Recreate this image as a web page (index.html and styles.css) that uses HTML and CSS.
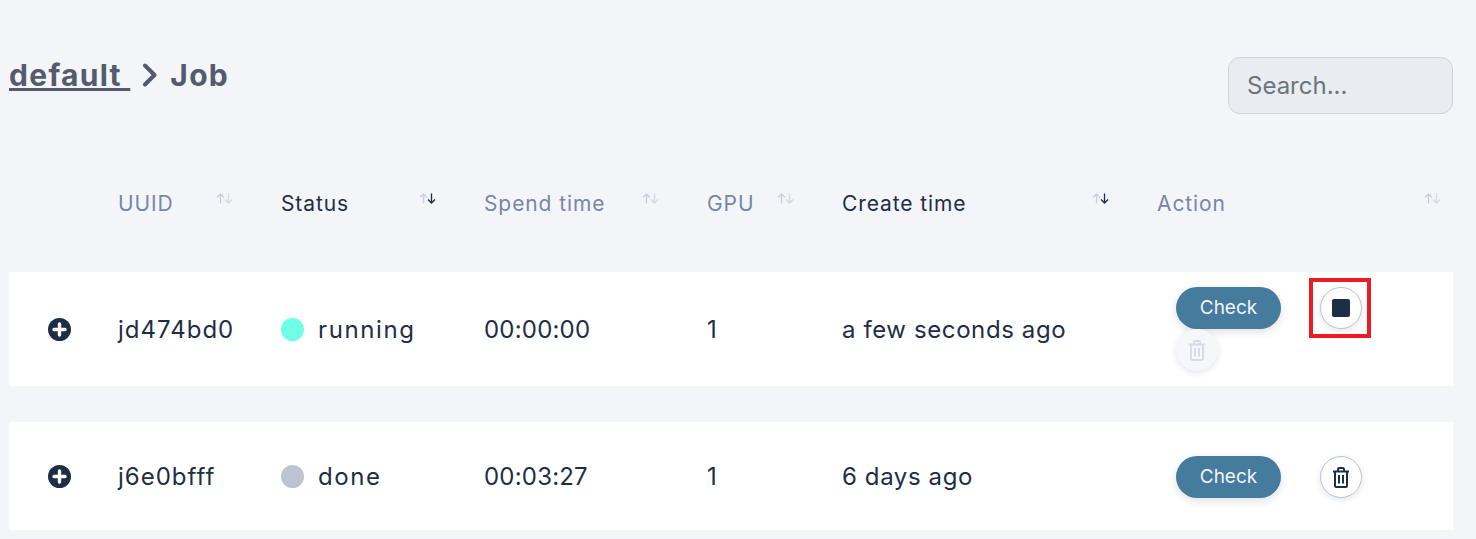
FILE: index.html
```html
<!DOCTYPE html>
<html lang="en">
<head>
    <meta charset="UTF-8">
    <meta name="viewport" content="width=device-width, initial-scale=1.0">
    <title>Job</title>
    <link rel="stylesheet" href="styles.css">
</head>
<body>

<svg class="icon-defs" width="0" height="0">
    <defs>
        <symbol id="sort-icon" viewBox="0 0 17 11">
            <path stroke="#c9cede" d="M4.500 10.500V1M1 4.500L4.500 1 8 4.500"/>
            <path stroke="currentColor" d="M12.500.5V10M9 6.500l3.500 3.500L16 6.500"/>
        </symbol>
        <symbol id="trash-icon" viewBox="0 0 18 21">
            <path d="M1 4.500h16M6 4.500V2.300c0-.7.500-1.300 1.200-1.300h3.600c.7 0 1.200.6 1.200 1.300v2.200M3 4.500v14c0 1 .7 1.500 1.500 1.500h9c.8 0 1.500-.5 1.500-1.500v-14M7 8v8.500M11 8v8.500"/>
        </symbol>
        <symbol id="plus-icon" viewBox="0 0 23 23">
            <circle cx="11.500" cy="11.500" r="11.500" fill="#1f2d45"/>
            <path d="M11.500 6v11M6 11.500h11" stroke="#fff" stroke-width="3.400" stroke-linecap="round"/>
        </symbol>
    </defs>
</svg>

<div class="page">
    <div class="top-bar">
        <h1 class="crumbs">
            <a class="crumb-link" href="#">default&nbsp;</a>
            <svg class="crumb-sep" viewBox="0 0 16 24" width="16" height="24"><path d="M3 2.500l9.500 9.500L3 21.500"/></svg>
            <span>Job</span>
        </h1>
        <input class="search" type="text" placeholder="Search...">
    </div>

    <div class="job-table">
        <div class="cols head">
            <div class="th"><span></span></div>
            <div class="th"><span>UUID</span><svg class="sort"><use href="#sort-icon"/></svg></div>
            <div class="th active"><span>Status</span><svg class="sort"><use href="#sort-icon"/></svg></div>
            <div class="th"><span>Spend time</span><svg class="sort"><use href="#sort-icon"/></svg></div>
            <div class="th"><span>GPU</span><svg class="sort"><use href="#sort-icon"/></svg></div>
            <div class="th active"><span>Create time</span><svg class="sort"><use href="#sort-icon"/></svg></div>
            <div class="th last"><span>Action</span><svg class="sort"><use href="#sort-icon"/></svg></div>
        </div>

        <div class="cols job tall">
            <div class="cell expand"><svg class="plus"><use href="#plus-icon"/></svg></div>
            <div class="cell uuid">jd474bd0</div>
            <div class="cell status"><span class="dot running"></span>running</div>
            <div class="cell spend">00:00:00</div>
            <div class="cell">1</div>
            <div class="cell">a few seconds ago</div>
            <div class="cell actions">
                <button class="check-btn">Check</button>
                <button class="round-btn marked"><span class="stop"></span></button>
                <button class="round-btn disabled"><svg class="trash"><use href="#trash-icon"/></svg></button>
            </div>
        </div>

        <div class="cols job">
            <div class="cell expand"><svg class="plus"><use href="#plus-icon"/></svg></div>
            <div class="cell uuid">j6e0bfff</div>
            <div class="cell status"><span class="dot done"></span>done</div>
            <div class="cell spend">00:03:27</div>
            <div class="cell">1</div>
            <div class="cell">6 days ago</div>
            <div class="cell actions">
                <button class="check-btn">Check</button>
                <button class="round-btn"><svg class="trash"><use href="#trash-icon"/></svg></button>
            </div>
        </div>
    </div>
</div>

</body>
</html>
```

FILE: styles.css
```css
/* General Styles */
body {
    font-family: Inter, 'Noto Sans', sans-serif;
    margin: 0;
    background-color: #f3f5f9;
    color: #1f2d45;
    overflow: hidden;
}

.page {
    padding: 57px 23px 0 9px;
}

.icon-defs {
    position: absolute;
}

/* Top bar */
.top-bar {
    display: flex;
    justify-content: space-between;
    align-items: flex-start;
    height: 57px;
}

.crumbs {
    display: flex;
    align-items: center;
    margin: 0;
    height: 36px;
    font-size: 30px;
    font-weight: 700;
    letter-spacing: 1.300px;
    color: #555a6e;
}

.crumb-link {
    color: #555a6e;
}

.crumb-sep {
    margin: 0 12px;
}

.crumb-sep path {
    fill: none;
    stroke: #555a6e;
    stroke-width: 4;
    stroke-linecap: round;
    stroke-linejoin: round;
}

.search {
    box-sizing: border-box;
    width: 225px;
    height: 57px;
    padding: 0 18px;
    font-family: inherit;
    font-size: 24px;
    background-color: #e9ecf1;
    border: 1px solid #ced4da;
    border-radius: 12px;
}

.search::placeholder {
    color: #6c757d;
    opacity: 1;
}

/* Table */
.cols {
    display: grid;
    grid-template-columns: 109px 163px 203px 223px 135px 315px 296px;
}

.head {
    height: 158px;
    align-items: start;
}

.th {
    display: flex;
    justify-content: space-between;
    align-items: flex-start;
    padding: 76px 48px 0 0;
    font-size: 21px;
    line-height: 28px;
    letter-spacing: 0.900px;
    color: #7a86a5;
}

.th.active {
    color: #1f2d45;
}

.th.last {
    padding-right: 12px;
}

.sort {
    width: 17px;
    height: 11px;
    margin-top: 3px;
    fill: none;
    stroke-width: 1.300;
    color: #d3d7e2;
}

.active .sort {
    color: #1f2d45;
}

.job {
    height: 108px;
    background-color: #fff;
    align-items: center;
}

.job + .job {
    margin-top: 36px;
}

.job.tall {
    height: 114px;
}

.cell {
    display: flex;
    align-items: center;
    font-size: 24px;
    letter-spacing: 0.600px;
}

.cell.uuid {
    letter-spacing: 1px;
}

.cell.status {
    letter-spacing: 1.600px;
}

.cell.spend {
    letter-spacing: 0.200px;
}

.expand {
    padding-left: 39px;
}

.plus {
    width: 23px;
    height: 23px;
}

.dot {
    width: 23px;
    height: 23px;
    margin-right: 14px;
    border-radius: 50%;
}

.dot.running {
    background-color: #6fffe9;
}

.dot.done {
    background-color: #bcc3d3;
}

/* Actions */
.actions {
    flex-wrap: wrap;
    width: 200px;
    margin: 1px 0 0 19px;
    column-gap: 39px;
}

.tall .actions {
    margin-top: -1px;
}

.check-btn {
    width: 105px;
    height: 42px;
    padding: 0;
    border: none;
    border-radius: 21px;
    background-color: #457b9d;
    color: #f1f5f8;
    font-family: inherit;
    font-size: 19px;
    box-shadow: 0 3px 8px rgba(31, 45, 69, 0.15);
}

.round-btn {
    position: relative;
    display: flex;
    justify-content: center;
    align-items: center;
    box-sizing: border-box;
    width: 42px;
    height: 42px;
    margin-top: 1px;
    padding: 0;
    background-color: #fff;
    border: 1px solid #bcc3d3;
    border-radius: 50%;
    box-shadow: 0 2px 6px rgba(31, 45, 69, 0.12);
}

.round-btn.disabled {
    margin-top: 0;
    background-color: #f6f7fa;
    border-color: #f6f7fa;
}

.round-btn.marked::after {
    content: '';
    position: absolute;
    top: -10px;
    left: -12px;
    box-sizing: border-box;
    width: 62px;
    height: 60px;
    border: 4px solid #ed1c24;
}

.stop {
    width: 18px;
    height: 18px;
    border-radius: 2px;
    background-color: #1f2d45;
}

.trash {
    width: 18px;
    height: 21px;
    fill: none;
    stroke: #1f2d45;
    stroke-width: 2;
}

.disabled .trash {
    stroke: #d9dce6;
}
```
